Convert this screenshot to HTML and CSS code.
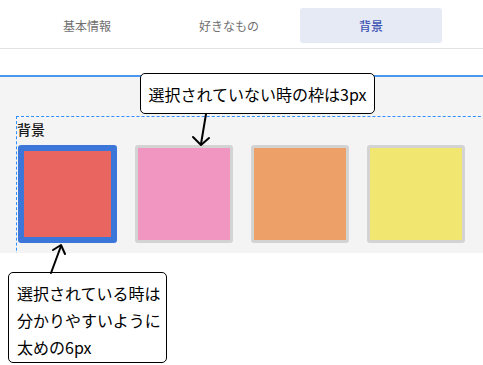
FILE: index.html
```html
<!DOCTYPE html>
<html lang="ja">
<head>
<meta charset="utf-8">
<link rel="stylesheet" href="styles.css">
</head>
<body>
<div class="page">
  <nav class="tabs">
    <div class="tab">基本情報</div>
    <div class="tab">好きなもの</div>
    <div class="tab active">背景</div>
  </nav>
  <section class="panel">
    <div class="field">
      <div class="label">背景</div>
      <div class="swatches">
        <div class="swatch selected red"></div>
        <div class="swatch pink"></div>
        <div class="swatch orange"></div>
        <div class="swatch yellow"></div>
      </div>
    </div>
  </section>

  <div class="callout callout-top">選択されていない時の枠は3px</div>
  <div class="callout callout-bottom">選択されている時は<br>分かりやすいように<br>太めの6px</div>

  <svg class="arrow arrow-down" width="30" height="40" viewBox="0 0 30 40">
    <path d="M16 0 L11 30" fill="none" stroke="#000" stroke-width="2" stroke-linecap="round"/>
    <path d="M3 23 L11 31 L19 24" fill="none" stroke="#000" stroke-width="2" stroke-linecap="round" stroke-linejoin="round"/>
  </svg>
  <svg class="arrow arrow-up" width="30" height="40" viewBox="0 0 30 40">
    <path d="M5 38 L15 11" fill="none" stroke="#000" stroke-width="2" stroke-linecap="round"/>
    <path d="M7 15 L15 10 L19 19" fill="none" stroke="#000" stroke-width="2" stroke-linecap="round" stroke-linejoin="round"/>
  </svg>
</div>
</body>
</html>
```

FILE: styles.css
```css
* { box-sizing: border-box; }
html, body {
  margin: 0;
  padding: 0;
  background: #ffffff;
  font-family: "Noto Sans CJK JP", "Noto Sans", sans-serif;
}
.page {
  position: relative;
  width: 483px;
  height: 365px;
  overflow: hidden;
}
.tabs {
  display: flex;
  padding: 8px 0 0 16px;
  height: 49px;
  border-bottom: 1px solid #e2e2e2;
}
.tab {
  width: 142px;
  height: 35px;
  display: flex;
  align-items: center;
  justify-content: center;
  font-size: 12px;
  color: #6f6f6f;
  border-radius: 3px;
}
.tab.active {
  background: #e6eaf5;
  color: #3d55b3;
  font-weight: 500;
}
.panel {
  margin-top: 26px;
  height: 178px;
  border-top: 2px solid #4b97ee;
  background: #f4f4f5;
  padding: 39px 0 0 16px;
  overflow: hidden;
}
.field {
  width: 500px;
  height: 160px;
  border: 1px dashed #2f8fff;
  border-bottom: none;
  padding: 0 0 0 1px;
}
.label {
  font-size: 14px;
  line-height: 18px;
  color: #1a1a1a;
  font-weight: 500;
  margin-top: 3px;
  margin-left: -1px;
}
.swatches {
  display: flex;
  gap: 18px;
  margin-top: 7px;
}
.swatch {
  width: 98px;
  height: 98px;
  border: 3px solid #d3d3d3;
  border-radius: 3px;
}
.swatch.selected {
  width: 99px;
  border: 6px solid #3b76d8;
}
.red { background: #e8665f; }
.pink { background: #f096c1; }
.orange { background: #eda068; }
.yellow { background: #f1e770; }

.callout {
  position: absolute;
  background: #ffffff;
  border: 1.5px solid #000;
  border-radius: 5px;
  font-size: 16px;
  color: #000;
}
.callout-top {
  left: 140px;
  top: 73px;
  width: 235px;
  height: 41px;
  display: flex;
  align-items: center;
  justify-content: center;
}
.callout-bottom {
  left: 8px;
  top: 272px;
  width: 159px;
  height: 91px;
  padding: 7px 0 0 8px;
  line-height: 27px;
}
.arrow {
  position: absolute;
}
.arrow-down {
  left: 190px;
  top: 114px;
}
.arrow-up {
  left: 46px;
  top: 235px;
}
```
